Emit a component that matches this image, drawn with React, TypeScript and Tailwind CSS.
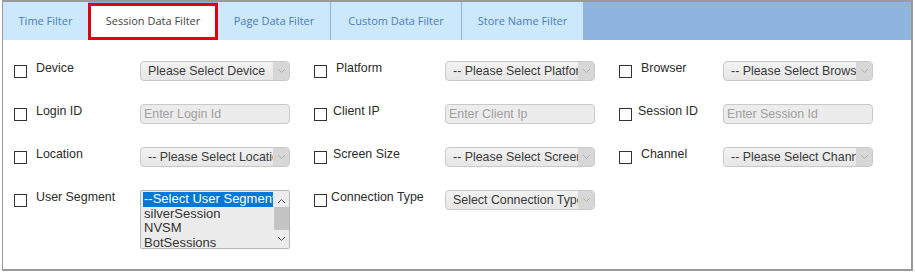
import React from "react";

const tabs = [
  { label: "Time Filter", w: "w-[85px]" },
  { label: "Session Data Filter", w: "w-[130px]", active: true },
  { label: "Page Data Filter", w: "w-[112px]" },
  { label: "Custom Data Filter", w: "w-[130px] ml-[1px]" },
  { label: "Store Name Filter", w: "w-[121px] ml-[1px]" },
];

function Checkbox() {
  return <div className="mt-[4px] h-[13px] w-[13px] shrink-0 border border-[#333] bg-white" />;
}

function Chevron({ className = "" }: { className?: string }) {
  return (
    <svg className={className} width="9" height="6" viewBox="0 0 9 6" fill="none">
      <path d="M1 1l3.5 3.5L8 1" stroke="currentColor" strokeWidth="1" />
    </svg>
  );
}

function FakeSelect({ text }: { text: string }) {
  return (
    <div className="flex h-[20px] w-[150px] shrink-0 overflow-hidden rounded-[4px] border border-[#c9c9c9] bg-gradient-to-b from-[#f3f3f3] to-[#e6e6e6]">
      <div className="flex-1 overflow-hidden whitespace-nowrap pl-[7px] text-[12.4px] leading-[18px] text-[#3a3a3a]">
        {text}
      </div>
      <div className="flex w-[16px] items-center justify-center bg-[#d7d7d7] text-[#b0b0b0]">
        <Chevron />
      </div>
    </div>
  );
}

function FakeInput({ placeholder }: { placeholder: string }) {
  return (
    <div className="h-[20px] w-[150px] shrink-0 overflow-hidden whitespace-nowrap rounded-[4px] border border-[#c9c9c9] bg-[#ececec] pl-[3px] text-[12.4px] leading-[18px] text-[#a0a0a0]">
      {placeholder}
    </div>
  );
}

function SegmentList() {
  const items = ["silverSession", "NVSM", "BotSessions"];
  return (
    <div className="flex h-[59px] w-[150px] shrink-0 overflow-hidden rounded-[2px] border border-[#b5b5b5] bg-[#ececec]">
      <div className="flex-1 overflow-hidden pl-[2px] pt-[1px] text-[13px] leading-[14.6px] text-[#333]">
        <div className="whitespace-nowrap bg-[#0078d7] pl-[1px] text-white">--Select User Segment--</div>
        {items.map((i) => (
          <div key={i} className="whitespace-nowrap pl-[1px]">
            {i}
          </div>
        ))}
      </div>
      <div className="flex w-[16px] flex-col items-center bg-[#ececec] text-[#505050]">
        <Chevron className="mt-[7px] rotate-180" />
        <div className="mt-[3px] h-[23px] w-[15px] bg-[#c4c4c4]" />
        <Chevron className="mt-[6px]" />
      </div>
    </div>
  );
}

type Cell = {
  label: string;
  labelMl: string;
  labelW: string;
  control: React.ReactNode;
};

function FilterCell({ cell }: { cell: Cell }) {
  return (
    <div className="flex items-start">
      <Checkbox />
      <div className={`${cell.labelMl} ${cell.labelW} shrink-0 whitespace-nowrap text-[12.4px] leading-[14px] text-[#2b2b2b]`}>
        {cell.label}
      </div>
      {cell.control}
    </div>
  );
}

export default function App() {
  const c1 = { labelW: "w-[104px]" };
  const rows: Cell[][] = [
    [
      { label: "Device", labelMl: "ml-[9px]", ...c1, control: <FakeSelect text="Please Select Device" /> },
      { label: "Platform", labelMl: "ml-[9px]", labelW: "w-[109px]", control: <FakeSelect text="-- Please Select Platform --" /> },
      { label: "Browser", labelMl: "ml-[9px]", labelW: "w-[82px]", control: <FakeSelect text="-- Please Select Browser --" /> },
    ],
    [
      { label: "Login ID", labelMl: "ml-[9px]", ...c1, control: <FakeInput placeholder="Enter Login Id" /> },
      { label: "Client IP", labelMl: "ml-[6px]", labelW: "w-[112px]", control: <FakeInput placeholder="Enter Client Ip" /> },
      { label: "Session ID", labelMl: "ml-[6px]", labelW: "w-[85px]", control: <FakeInput placeholder="Enter Session Id" /> },
    ],
    [
      { label: "Location", labelMl: "ml-[9px]", ...c1, control: <FakeSelect text="-- Please Select Location --" /> },
      { label: "Screen Size", labelMl: "ml-[6px]", labelW: "w-[112px]", control: <FakeSelect text="-- Please Select Screen Size --" /> },
      { label: "Channel", labelMl: "ml-[9px]", labelW: "w-[82px]", control: <FakeSelect text="-- Please Select Channel --" /> },
    ],
    [
      { label: "User Segment", labelMl: "ml-[9px]", ...c1, control: <SegmentList /> },
      { label: "Connection Type", labelMl: "ml-[4px]", labelW: "w-[114px]", control: <FakeSelect text="Select Connection Type" /> },
    ],
  ];

  return (
    <div className="h-[272px] w-[915px] bg-white font-['Liberation_Sans',Arial,sans-serif]">
      <div className="ml-[2px] flex h-[271px] w-[911px] flex-col border-b-2 border-l border-r-2 border-t-2 border-[#9a9a9a]">
        <div className="flex h-[38px] bg-[#8fb4dd]">
          {tabs.map((t) =>
            t.active ? (
              <div
                key={t.label}
                className={`${t.w} mt-[1px] flex h-[37px] items-center justify-center border-[3px] border-[#e3000e] bg-white font-['Open_Sans',sans-serif] text-[11px] text-[#444]`}
              >
                {t.label}
              </div>
            ) : (
              <div
                key={t.label}
                className={`${t.w} flex h-[38px] items-center justify-center bg-[#cce8fc] font-['Open_Sans',sans-serif] text-[11px] text-[#4d7db9]`}
              >
                {t.label}
              </div>
            )
          )}
        </div>
        <div className="flex flex-col gap-[23px] pl-[11px] pt-[21px]">
          {rows.map((row, ri) => (
            <div key={ri} className="grid grid-cols-[300px_305px_1fr]">
              {row.map((cell) => (
                <FilterCell key={cell.label} cell={cell} />
              ))}
            </div>
          ))}
        </div>
      </div>
    </div>
  );
}
